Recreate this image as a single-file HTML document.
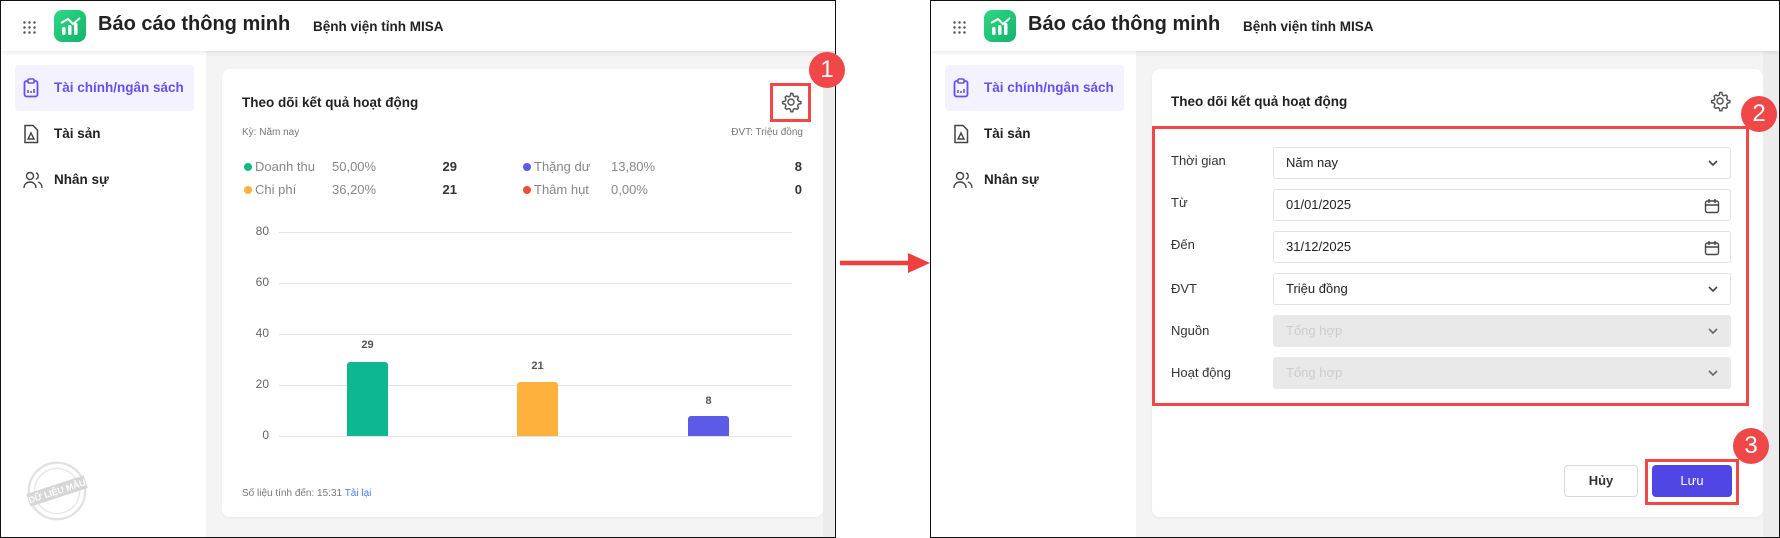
<!DOCTYPE html>
<html><head><meta charset="utf-8"><style>
*{box-sizing:border-box;margin:0;padding:0}
body{width:1780px;height:538px;background:#fff;position:relative;overflow:hidden;font-family:"Liberation Sans",Arial,sans-serif;color:#222}
.abs{position:absolute}
.panel{position:absolute;top:0;height:538px;border:1.5px solid #111;background:#f4f4f4;overflow:hidden}
.hdr{position:absolute;left:0;top:0;right:0;height:50px;background:#fff;box-shadow:0 2px 4px rgba(0,0,0,.08);z-index:2}
.side{position:absolute;left:0;top:50px;width:205px;bottom:0;background:#fff}
.dots{position:absolute;left:21px;top:19px;width:14px;height:14px;background-image:radial-gradient(circle,#555 1.1px,transparent 1.4px);background-size:5px 5px}
.logo{position:absolute;left:53px;top:9px;width:32px;height:32px;border-radius:8px;background:linear-gradient(135deg,#2fd883,#13b36c)}
.title{position:absolute;left:97px;top:12px;font-size:20px;font-weight:bold;color:#222}
.hosp{position:absolute;left:312px;top:18px;font-size:13.5px;font-weight:bold;color:#222}
.item{position:absolute;left:14px;width:179px;height:46px;font-size:13.5px;font-weight:bold;color:#222;line-height:46px;padding-left:39px;border-radius:4px}
.item.act{background:#f3f2fe;color:#6a4ff0}
.item svg{position:absolute;left:8px;top:13px}
.card{position:absolute;top:68px;height:448px;background:#fff;border-radius:8px;box-shadow:0 1px 3px rgba(0,0,0,.05)}
.ctitle{position:absolute;top:94px;font-size:13.5px;font-weight:bold;color:#222}
.sm{font-size:10px;color:#777}
.lg{position:absolute;font-size:13px;color:#888}
.num{position:absolute;font-size:13px;font-weight:bold;color:#333;text-align:right}
.dot{display:inline-block;width:8px;height:8px;border-radius:50%;margin-right:3px;vertical-align:0}
.yl{position:absolute;left:230px;width:38px;text-align:right;font-size:12px;color:#666}
.gl{position:absolute;left:278px;width:513px;height:1px;background:#e3e4ea}
.bar{position:absolute;width:41px;border-radius:3px 3px 0 0}
.bl{position:absolute;width:41px;text-align:center;font-size:11px;font-weight:bold;color:#555}
.badge{position:absolute;width:36px;height:36px;border-radius:50%;background:#f04848;color:#fff;font-size:24px;line-height:36px;text-align:center;z-index:5}
.lab{position:absolute;left:1171px;font-size:13px;color:#333}
.inp{position:absolute;left:1273px;width:458px;height:32px;border:1px solid #e2e2e2;border-radius:3px;background:#fff;font-size:13px;color:#222;line-height:30px;padding-left:12px}
.inp.dis{background:#e9e9e9;border-color:#e9e9e9;color:#ccc}
.inp svg{position:absolute;right:10px;top:8px}
</style></head><body>

<!-- LEFT PANEL -->
<div class="panel" style="left:0;width:836px">
 <div class="hdr">
  <div class="dots"></div>
  <div class="logo"><svg width="32" height="32" viewBox="0 0 32 32"><path d="M7 13l7-4 5 5 7-6" stroke="#fff" stroke-width="2" fill="none"/><rect x="8" y="17" width="3.5" height="8" rx="1.5" fill="#fff"/><rect x="14" y="15" width="3.5" height="10" rx="1.5" fill="#fff"/><rect x="20" y="13" width="3.5" height="12" rx="1.5" fill="#fff"/></svg></div>
  <div class="title">Báo cáo thông minh</div>
  <div class="hosp">Bệnh viện tỉnh MISA</div>
 </div>
 <div class="side">
  <div class="item act" style="top:14px"><svg width="16" height="20" viewBox="0 0 16 20"><rect x="1.5" y="3" width="13" height="15.5" rx="2" fill="none" stroke="#6a4ff0" stroke-width="1.8"/><rect x="5" y="1" width="6" height="4" rx="1" fill="#fff" stroke="#6a4ff0" stroke-width="1.6"/><path d="M5 15v-3M8 15v-2M11 15v-4" stroke="#6a4ff0" stroke-width="1.6"/></svg>Tài chính/ngân sách</div>
  <div class="item" style="top:60px"><svg width="16" height="20" viewBox="0 0 16 20"><path d="M2 1.5h8l4.5 4.5v12.5h-12.5z" fill="none" stroke="#444" stroke-width="1.5"/><path d="M8 9l3 6h-6z" fill="none" stroke="#444" stroke-width="1.4"/></svg>Tài sản</div>
  <div class="item" style="top:106px"><svg width="20" height="20" viewBox="0 0 20 20"><circle cx="7" cy="6" r="3.5" fill="none" stroke="#444" stroke-width="1.4"/><path d="M1 18c0-4 3-6 6-6s6 2 6 6" fill="none" stroke="#444" stroke-width="1.4"/><path d="M13 2.8a3.5 3.5 0 010 6.5M15 12c2 .6 4 2.5 4 6" fill="none" stroke="#444" stroke-width="1.4"/></svg>Nhân sự</div>
  <svg class="abs" style="left:24px;top:408px" width="64" height="64" viewBox="0 0 68 68"><circle cx="34" cy="34" r="30" fill="none" stroke="#e2e2e2" stroke-width="2.5"/><circle cx="34" cy="34" r="24" fill="none" stroke="#e8e8e8" stroke-width="1.5"/><g transform="rotate(-18 34 34)"><rect x="2" y="27" width="64" height="14" fill="#d6d6d6"/><text x="34" y="37.5" font-size="9.5" font-weight="bold" fill="#fff" text-anchor="middle" font-family="Liberation Sans">DỮ LIỆU MẪU</text></g></svg>
 </div>
 <div class="card" style="left:221px;width:601px"></div>
 <div class="abs" style="left:822px;top:50px;width:13px;height:488px;background:#ececec"></div>
 <div class="ctitle" style="left:241px">Theo dõi kết quả hoạt động</div>
 <svg class="abs" style="left:779px;top:90px" width="22" height="22" viewBox="0 0 24 24"><path d="M12 2.5l2 .2.5 2.6 1.7 1 2.5-.9 1.4 1.5-.9 2.5 1 1.7 2.6.5v2.2l-2.6.5-1 1.7.9 2.5-1.4 1.5-2.5-.9-1.7 1-.5 2.6h-2.2l-.5-2.6-1.7-1-2.5.9-1.5-1.5.9-2.5-1-1.7-2.6-.5v-2.2l2.6-.5 1-1.7-.9-2.5 1.5-1.5 2.5.9 1.7-1 .5-2.6z" fill="none" stroke="#555" stroke-width="1.6" stroke-linejoin="round"/><circle cx="12" cy="12" r="3.3" fill="none" stroke="#555" stroke-width="1.6"/></svg>
 <div class="abs" style="left:769px;top:82px;width:41px;height:39px;border:3px solid #f04848"></div>
 <div class="abs sm" style="left:241px;top:126px">Kỳ: Năm nay</div>
 <div class="abs sm" style="left:701px;top:126px;width:101px;text-align:right">ĐVT: Triệu đồng</div>
 <div class="lg" style="left:243px;top:158px"><span class="dot" style="background:#12b886"></span>Doanh thu</div>
 <div class="lg" style="left:331px;top:158px">50,00%</div>
 <div class="num" style="left:420px;top:158px;width:36px">29</div>
 <div class="lg" style="left:243px;top:181px"><span class="dot" style="background:#ffb13d"></span>Chi phí</div>
 <div class="lg" style="left:331px;top:181px">36,20%</div>
 <div class="num" style="left:420px;top:181px;width:36px">21</div>
 <div class="lg" style="left:522px;top:158px"><span class="dot" style="background:#5b5be8"></span>Thặng dư</div>
 <div class="lg" style="left:610px;top:158px">13,80%</div>
 <div class="num" style="left:765px;top:158px;width:36px">8</div>
 <div class="lg" style="left:522px;top:181px"><span class="dot" style="background:#ef4c3c"></span>Thâm hụt</div>
 <div class="lg" style="left:610px;top:181px">0,00%</div>
 <div class="num" style="left:765px;top:181px;width:36px">0</div>
 <div class="yl" style="top:223px">80</div><div class="gl" style="top:231px"></div>
 <div class="yl" style="top:274px">60</div><div class="gl" style="top:282px"></div>
 <div class="yl" style="top:325px">40</div><div class="gl" style="top:333px"></div>
 <div class="yl" style="top:376px">20</div><div class="gl" style="top:384px"></div>
 <div class="yl" style="top:427px">0</div><div class="gl" style="top:435px"></div>
 <div class="bar" style="left:346px;top:361px;height:74px;background:#0db792"></div><div class="bl" style="left:346px;top:338px">29</div>
 <div class="bar" style="left:516px;top:381px;height:54px;background:#ffb13d"></div><div class="bl" style="left:516px;top:359px">21</div>
 <div class="bar" style="left:687px;top:415px;height:20px;background:#5b5be8"></div><div class="bl" style="left:687px;top:394px">8</div>
 <div class="abs sm" style="left:241px;top:487px">Số liệu tính đến: 15:31 <span style="color:#4a7df0">Tải lại</span></div>
</div>
<div class="badge" style="left:809px;top:52px">1</div>

<!-- ARROW -->
<svg class="abs" style="left:838px;top:250px" width="95" height="26" viewBox="0 0 95 26"><path d="M2 13h72" stroke="#ef3f3f" stroke-width="4.5"/><path d="M70 3l22 10-22 10z" fill="#ef3f3f"/></svg>

<!-- RIGHT PANEL -->
<div class="panel" style="left:930px;width:850px">
 <div class="hdr">
  <div class="dots"></div>
  <div class="logo"><svg width="32" height="32" viewBox="0 0 32 32"><path d="M7 13l7-4 5 5 7-6" stroke="#fff" stroke-width="2" fill="none"/><rect x="8" y="17" width="3.5" height="8" rx="1.5" fill="#fff"/><rect x="14" y="15" width="3.5" height="10" rx="1.5" fill="#fff"/><rect x="20" y="13" width="3.5" height="12" rx="1.5" fill="#fff"/></svg></div>
  <div class="title">Báo cáo thông minh</div>
  <div class="hosp">Bệnh viện tỉnh MISA</div>
 </div>
 <div class="side">
  <div class="item act" style="top:14px"><svg width="16" height="20" viewBox="0 0 16 20"><rect x="1.5" y="3" width="13" height="15.5" rx="2" fill="none" stroke="#6a4ff0" stroke-width="1.8"/><rect x="5" y="1" width="6" height="4" rx="1" fill="#fff" stroke="#6a4ff0" stroke-width="1.6"/><path d="M5 15v-3M8 15v-2M11 15v-4" stroke="#6a4ff0" stroke-width="1.6"/></svg>Tài chính/ngân sách</div>
  <div class="item" style="top:60px"><svg width="16" height="20" viewBox="0 0 16 20"><path d="M2 1.5h8l4.5 4.5v12.5h-12.5z" fill="none" stroke="#444" stroke-width="1.5"/><path d="M8 9l3 6h-6z" fill="none" stroke="#444" stroke-width="1.4"/></svg>Tài sản</div>
  <div class="item" style="top:106px"><svg width="20" height="20" viewBox="0 0 20 20"><circle cx="7" cy="6" r="3.5" fill="none" stroke="#444" stroke-width="1.4"/><path d="M1 18c0-4 3-6 6-6s6 2 6 6" fill="none" stroke="#444" stroke-width="1.4"/><path d="M13 2.8a3.5 3.5 0 010 6.5M15 12c2 .6 4 2.5 4 6" fill="none" stroke="#444" stroke-width="1.4"/></svg>Nhân sự</div>
 </div>
 <div class="card" style="left:221px;width:611px"></div>
 <div class="abs" style="left:832px;top:50px;width:20px;height:488px;background:#ececec"></div>
</div>
<div class="ctitle" style="left:1171px">Theo dõi kết quả hoạt động</div>
<svg class="abs" style="left:1709px;top:90px" width="22" height="22" viewBox="0 0 24 24"><path d="M12 2.5l2 .2.5 2.6 1.7 1 2.5-.9 1.4 1.5-.9 2.5 1 1.7 2.6.5v2.2l-2.6.5-1 1.7.9 2.5-1.4 1.5-2.5-.9-1.7 1-.5 2.6h-2.2l-.5-2.6-1.7-1-2.5.9-1.5-1.5.9-2.5-1-1.7-2.6-.5v-2.2l2.6-.5 1-1.7-.9-2.5 1.5-1.5 2.5.9 1.7-1 .5-2.6z" fill="none" stroke="#555" stroke-width="1.6" stroke-linejoin="round"/><circle cx="12" cy="12" r="3.3" fill="none" stroke="#555" stroke-width="1.6"/></svg>
<div class="abs" style="left:1152px;top:126px;width:597px;height:280px;border:3px solid #f04848"></div>
<div class="badge" style="left:1741px;top:96px">2</div>

<div class="lab" style="top:153px">Thời gian</div>
<div class="inp" style="top:147px">Năm nay<svg width="14" height="14" viewBox="0 0 14 14"><path d="M3 5l4 4 4-4" stroke="#444" stroke-width="1.6" fill="none"/></svg></div>
<div class="lab" style="top:195px">Từ</div>
<div class="inp" style="top:189px">01/01/2025<svg width="16" height="16" viewBox="0 0 16 16"><rect x="1.5" y="3" width="13" height="11.5" rx="2" fill="none" stroke="#444" stroke-width="1.4"/><path d="M1.5 7h13M5 1v4M11 1v4" stroke="#444" stroke-width="1.4"/></svg></div>
<div class="lab" style="top:237px">Đến</div>
<div class="inp" style="top:231px">31/12/2025<svg width="16" height="16" viewBox="0 0 16 16"><rect x="1.5" y="3" width="13" height="11.5" rx="2" fill="none" stroke="#444" stroke-width="1.4"/><path d="M1.5 7h13M5 1v4M11 1v4" stroke="#444" stroke-width="1.4"/></svg></div>
<div class="lab" style="top:281px">ĐVT</div>
<div class="inp" style="top:273px">Triệu đồng<svg width="14" height="14" viewBox="0 0 14 14"><path d="M3 5l4 4 4-4" stroke="#444" stroke-width="1.6" fill="none"/></svg></div>
<div class="lab" style="top:323px">Nguồn</div>
<div class="inp dis" style="top:315px">Tổng hợp<svg width="14" height="14" viewBox="0 0 14 14"><path d="M3 5l4 4 4-4" stroke="#666" stroke-width="1.6" fill="none"/></svg></div>
<div class="lab" style="top:365px">Hoạt động</div>
<div class="inp dis" style="top:357px">Tổng hợp<svg width="14" height="14" viewBox="0 0 14 14"><path d="M3 5l4 4 4-4" stroke="#666" stroke-width="1.6" fill="none"/></svg></div>

<div class="abs" style="left:1564px;top:465px;width:74px;height:32px;border:1px solid #d6d6e6;border-radius:4px;background:#fff;font-size:13px;font-weight:bold;color:#333;text-align:center;line-height:30px">Hủy</div>
<div class="abs" style="left:1652px;top:465px;width:80px;height:32px;border-radius:4px;background:#4f46e5;font-size:13px;color:#fff;text-align:center;line-height:32px">Lưu</div>
<div class="abs" style="left:1645px;top:459px;width:94px;height:46px;border:3px solid #f04848"></div>
<div class="badge" style="left:1733px;top:428px">3</div>
</body></html>
